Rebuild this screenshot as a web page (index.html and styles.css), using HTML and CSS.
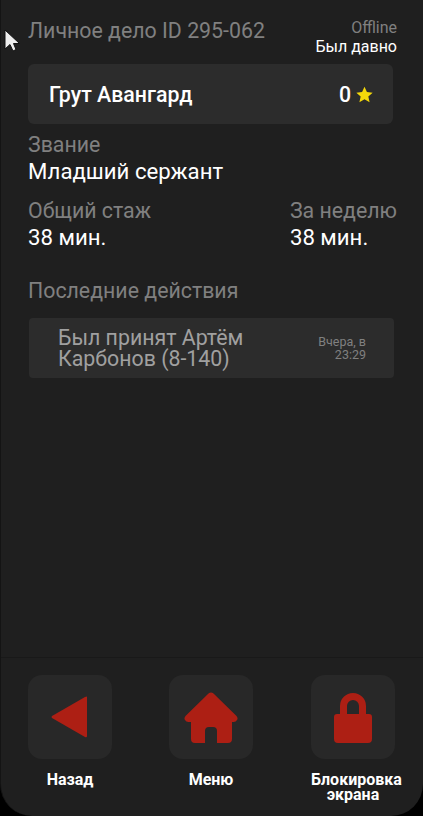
FILE: index.html
```html
<!DOCTYPE html>
<html lang="ru">
<head>
<meta charset="UTF-8">
<meta name="viewport" content="width=device-width, initial-scale=1.0">
<title>Личное дело</title>
<link rel="stylesheet" href="styles.css">
</head>
<body>

<div class="screen">

  <svg class="cursor" width="16" height="24" viewBox="0 0 16 24">
    <path d="M1 1 L1 20 L6 15.500 L9 22 L12 20.500 L9.500 14.500 L15.500 14.500 Z" fill="#eee" stroke="#111" stroke-width="1"/>
  </svg>

  <div class="content">
    <div class="header">
      <div class="title">Личное дело ID 295-062</div>
      <div class="status">
        <div class="status-label">Offline</div>
        <div class="status-value">Был давно</div>
      </div>
    </div>

    <div class="name-card">
      <div class="name">Грут Авангард</div>
      <div class="rating">
        <span>0</span>
        <svg width="17" height="17" viewBox="0 0 24 24"><path d="M12 1 L15.400 8.600 L23.500 9.400 L17.400 14.900 L19.200 23 L12 18.800 L4.800 23 L6.600 14.900 L0.500 9.400 L8.600 8.600 Z" fill="#f5d90a"/></svg>
      </div>
    </div>

    <div class="field">
      <div class="label">Звание</div>
      <div class="value">Младший сержант</div>
    </div>

    <div class="stats">
      <div class="field">
        <div class="label">Общий стаж</div>
        <div class="value">38 мин.</div>
      </div>
      <div class="field">
        <div class="label">За неделю</div>
        <div class="value">38 мин.</div>
      </div>
    </div>

    <div class="label section-title">Последние действия</div>

    <div class="action">
      <div class="action-text">Был принят Артём Карбонов (8-140)</div>
      <div class="action-time">Вчера, в 23:29</div>
    </div>
  </div>

  <div class="nav">
    <div class="nav-item">
      <div class="nav-button">
        <svg width="38" height="42" viewBox="0 0 38 42"><path d="M36 1 L36 40 Q36 42 34 41 L1 22 Q0 21 1 20 L34 1 Q36 0 36 1 Z" fill="#ad1f14"/></svg>
      </div>
      <div class="nav-label">Назад</div>
    </div>
    <div class="nav-item">
      <div class="nav-button">
        <svg width="54" height="52" viewBox="0 0 54 52"><path d="M24.500 2.500 Q27 0.500 29.500 2.500 L52 24.500 Q54.500 27 53 29 Q52 31 49.500 31 L48 31 L48 48 Q48 52 44 52 L33 52 L33 40 Q33 36 29 36 L25 36 Q21 36 21 40 L21 52 L11 52 Q7 52 7 48 L7 31 L4.500 31 Q2 31 1 29 Q-0.500 27 2 24.500 Z" fill="#ad1f14"/></svg>
      </div>
      <div class="nav-label">Меню</div>
    </div>
    <div class="nav-item">
      <div class="nav-button">
        <svg width="38" height="52" viewBox="0 0 38 52"><path d="M6 23 L6 15 A13 13 0 0 1 32 15 L32 23 L35 23 Q38 23 38 26 L38 48 Q38 52 34 52 L4 52 Q0 52 0 48 L0 26 Q0 23 3 23 Z M13 23 L25 23 L25 15 A6 6 0 0 0 13 15 Z" fill="#ad1f14" fill-rule="evenodd"/></svg>
      </div>
      <div class="nav-label">Блокировка экрана</div>
    </div>
  </div>

</div>

</body>
</html>
```

FILE: styles.css
```css
html, body {
  margin: 0;
  padding: 0;
  background-color: #000;
}
body {
  font-family: Roboto, sans-serif;
  color: #fff;
}
.screen {
  position: relative;
  box-sizing: border-box;
  width: 423px;
  height: 816px;
  display: flex;
  flex-direction: column;
  background-color: #1f1f1f;
  border-left: 1px solid #141414;
  border-radius: 0 0 32px 32px;
  overflow: hidden;
}
.cursor {
  position: absolute;
  left: 3px;
  top: 29px;
}
.content {
  flex: 1;
  padding: 18px 26px 0 27px;
}
.header {
  display: flex;
  justify-content: space-between;
}
.title {
  margin-top: 1px;
  font-size: 21.33px;
  line-height: 24px;
  color: #808080;
}
.status {
  text-align: right;
  font-size: 16px;
  line-height: 19px;
}
.status-label {
  color: #808080;
}
.name-card {
  display: flex;
  justify-content: space-between;
  align-items: center;
  box-sizing: border-box;
  height: 60px;
  margin-top: 8px;
  margin-right: 4px;
  padding: 0 20px 0 21px;
  background-color: #2c2c2c;
  border-radius: 6px;
  font-size: 21.33px;
  font-weight: 500;
}
.rating {
  display: flex;
  align-items: center;
  gap: 5px;
}
.label {
  font-size: 21.33px;
  line-height: 24px;
  color: #808080;
}
.value {
  font-size: 22.2px;
  line-height: 24px;
  margin-top: 2px;
}
.name-card + .field {
  margin-top: 9px;
}
.stats {
  display: flex;
  justify-content: space-between;
  margin-top: 16px;
}
.section-title {
  margin-top: 30px;
}
.action {
  display: flex;
  align-items: center;
  box-sizing: border-box;
  height: 60px;
  margin-top: 15px;
  margin-left: 1px;
  margin-right: 3px;
  padding: 0 28px 0 29px;
  background-color: #2c2c2c;
  border-radius: 4px;
}
.action-text {
  flex: 1;
  font-size: 21.33px;
  line-height: 21px;
  color: #a0a0a0;
}
.action-time {
  width: 62px;
  text-align: right;
  font-size: 12.5px;
  line-height: 13px;
  color: #808080;
}
.nav {
  display: flex;
  gap: 1px;
  box-sizing: border-box;
  height: 159px;
  margin-left: -1px;
  padding: 17px 0 0 0;
  border-top: 1px solid #191919;
}
.nav-item {
  width: 140px;
  display: flex;
  flex-direction: column;
  align-items: center;
}
.nav-item:last-child {
  margin-left: auto;
}
.nav-button {
  width: 84px;
  height: 84px;
  display: flex;
  align-items: center;
  justify-content: center;
  background-color: #282828;
  border-radius: 14px;
}
.nav-label {
  width: 84px;
  margin-top: 13px;
  text-align: center;
  font-size: 16px;
  line-height: 15px;
  font-weight: 700;
}
```
